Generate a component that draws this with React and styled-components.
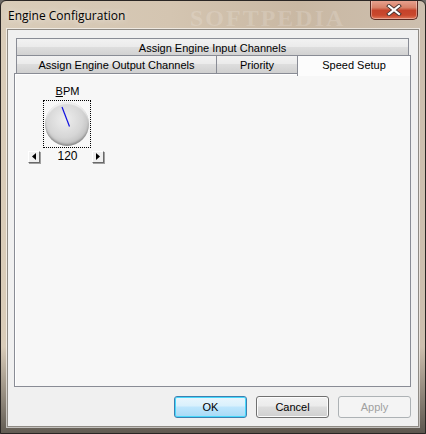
import React from "react";
import styled, { createGlobalStyle } from "styled-components";

const ui = `"Liberation Sans", Arial, sans-serif`;
const line = "#898c95";

const Global = createGlobalStyle`
  html, body { margin: 0; padding: 0; background: #6d6a66; }
  body { font-family: ${ui}; font-size: 11px; color: #000; }
`;

export default function App() {
  const [active, setActive] = React.useState("speed");
  const [bpm, setBpm] = React.useState(120);

  return (
    <>
      <Global />
      <Window>
        <TitleBar>
          <Title>Engine Configuration</Title>
          <Watermark>SOFTPEDIA</Watermark>
          <CloseButton aria-label="Close">
            <svg width="16" height="12" viewBox="0 0 16 12">
              <path d="M3 2 L13 10 M13 2 L3 10" stroke="#4a3530" strokeWidth="4" strokeLinecap="square" />
              <path d="M3 2 L13 10 M13 2 L3 10" stroke="#fff" strokeWidth="2.2" strokeLinecap="square" />
            </svg>
          </CloseButton>
        </TitleBar>

        <Client>
          <TabControl>
            <TabRow>
              <Tab $grow onClick={() => setActive("input")}>Assign Engine Input Channels</Tab>
            </TabRow>
            <TabRow>
              <Tab $w={201} onClick={() => setActive("output")}>Assign Engine Output Channels</Tab>
              <Tab $w={82} onClick={() => setActive("priority")}>Priority</Tab>
              <Tab $w={114} $selected={active === "speed"} onClick={() => setActive("speed")}>
                Speed Setup
              </Tab>
            </TabRow>
            <Panel>
              <Dial>
                <DialLabel><u>B</u>PM</DialLabel>
                <DialFrame>
                  <Knob>
                    <svg width="44" height="44" viewBox="0 0 44 44">
                      <line x1="17" y1="5" x2="24.5" y2="24.5" stroke="#1010e0" strokeWidth="1.2" />
                    </svg>
                  </Knob>
                </DialFrame>
                <DialControls>
                  <ArrowButton onClick={() => setBpm((v) => v - 1)}>
                    <svg width="4" height="7" viewBox="0 0 4 7"><path d="M4 0 L0 3.5 L4 7 Z" fill="#000" /></svg>
                  </ArrowButton>
                  <DialValue>{bpm}</DialValue>
                  <ArrowButton onClick={() => setBpm((v) => v + 1)}>
                    <svg width="4" height="7" viewBox="0 0 4 7"><path d="M0 0 L4 3.5 L0 7 Z" fill="#000" /></svg>
                  </ArrowButton>
                </DialControls>
              </Dial>
            </Panel>
          </TabControl>

          <ButtonBar>
            <Button $variant="default">OK</Button>
            <Button>Cancel</Button>
            <Button $variant="disabled" disabled>Apply</Button>
          </ButtonBar>
        </Client>
      </Window>
    </>
  );
}

const Window = styled.div`
  width: 426px;
  height: 434px;
  box-sizing: border-box;
  border: 1px solid #2a2624;
  border-radius: 6px 6px 0 0;
  padding: 0 6px 6px 6px;
  display: flex;
  flex-direction: column;
  overflow: hidden;
  background: linear-gradient(
      180deg,
      rgba(255, 255, 255, 0) 0%,
      rgba(255, 255, 255, 0) 80%,
      rgba(0, 0, 0, 0.55) 100%
    ),
    linear-gradient(90deg, #d9ccb9 0%, #d4c5b1 40%, #c9b8a3 70%, #cdbfae 100%);
`;

const TitleBar = styled.div`
  height: 28px;
  display: flex;
  align-items: flex-start;
`;

const Title = styled.div`
  font-family: "Open Sans", "Noto Sans", sans-serif;
  font-size: 12px;
  line-height: 16px;
  padding: 7px 0 0 1px;
  color: #000;
  text-shadow: 0 0 6px rgba(255, 255, 255, 0.9);
`;

const Watermark = styled.div`
  flex: 1;
  text-align: center;
  padding: 4px 0 0 40px;
  font-family: "Liberation Serif", serif;
  font-weight: bold;
  font-size: 24px;
  letter-spacing: 2px;
  color: rgba(255, 255, 255, 0.16);
  line-height: 26px;
  white-space: nowrap;
`;

const CloseButton = styled.button`
  width: 48px;
  height: 20px;
  margin: -1px 1px 0 0;
  padding: 0;
  display: flex;
  align-items: center;
  justify-content: center;
  border: 1px solid #5b2a22;
  border-top: none;
  border-radius: 0 0 5px 5px;
  background: linear-gradient(
    180deg,
    #e9a694 0%,
    #d88168 40%,
    #c5432a 55%,
    #c9482d 80%,
    #e0785a 100%
  );
  box-shadow: inset 0 0 0 1px rgba(255, 255, 255, 0.35);
`;

const Client = styled.div`
  flex: 1;
  display: flex;
  flex-direction: column;
  background: #f0f0f0;
  border: 1px solid #8e8a84;
  box-shadow: 0 0 0 1px rgba(255, 255, 255, 0.6);
  padding: 9px 7px 8px 6px;
`;

const TabControl = styled.div`
  flex: 1;
  display: flex;
  flex-direction: column;
`;

const TabRow = styled.div`
  display: flex;
  padding: 0 2px;
  height: 18px;
  align-items: flex-end;
  position: relative;
  & + & {
    margin-top: -1px;
  }
`;

const Tab = styled.div`
  box-sizing: border-box;
  ${(p) => (p.$grow ? "flex: 1;" : `width: ${p.$w}px;`)}
  height: ${(p) => (p.$selected ? "21px" : "19px")};
  margin: ${(p) => (p.$selected ? "0 -2px -2px -2px" : "0")};
  position: relative;
  z-index: ${(p) => (p.$selected ? 2 : 1)};
  display: flex;
  align-items: center;
  justify-content: center;
  padding-bottom: ${(p) => (p.$selected ? "3px" : "0")};
  border: 1px solid ${line};
  border-bottom: ${(p) => (p.$selected ? "none" : `1px solid ${line}`)};
  & + & {
    margin-left: -1px;
  }
  background: ${(p) =>
    p.$selected
      ? "#fcfcfc"
      : "linear-gradient(180deg, #f2f2f2 0%, #ebebeb 45%, #dddddd 50%, #d0d0d0 100%)"};
  font-size: 11px;
  white-space: nowrap;
  cursor: default;
`;

const Panel = styled.div`
  flex: 1;
  margin-top: -1px;
  border: 1px solid ${line};
  background: #f7f7f7;
  box-shadow: inset 1px 1px 0 #fff;
  padding: 11px 0 0 13px;
`;

const Dial = styled.div`
  width: 76px;
  display: flex;
  flex-direction: column;
  align-items: center;
`;

const DialLabel = styled.div`
  font-size: 11px;
  line-height: 13px;
  height: 15px;
  padding-left: 3px;
`;

const DialFrame = styled.div`
  width: 48px;
  height: 48px;
  box-sizing: border-box;
  border: 1px dotted #000;
  display: flex;
  align-items: center;
  justify-content: center;
  margin-left: 2px;
`;

const Knob = styled.div`
  width: 44px;
  height: 44px;
  border-radius: 50%;
  background: radial-gradient(
    circle at 45% 40%,
    #eeeeee 0%,
    #d6d6d6 50%,
    #b4b4b4 82%,
    #8e8e8e 100%
  );
  box-shadow: inset 0 -2px 2px rgba(0, 0, 0, 0.25), inset 0 2px 1px rgba(255, 255, 255, 0.6);
  & > svg {
    display: block;
  }
`;

const DialControls = styled.div`
  display: flex;
  align-items: center;
  justify-content: space-between;
  width: 76px;
  margin-top: 2px;
`;

const ArrowButton = styled.div`
  width: 12px;
  height: 12px;
  box-sizing: border-box;
  display: flex;
  align-items: center;
  justify-content: center;
  background: #f0f0f0;
  border: 1px solid;
  border-color: #fff #696969 #696969 #fff;
  box-shadow: 1px 1px 0 #a0a0a0;
`;

const DialValue = styled.div`
  font-size: 12px;
  line-height: 13px;
  color: #000;
  padding-left: 3px;
`;

const ButtonBar = styled.div`
  display: flex;
  justify-content: flex-end;
  gap: 9px;
  padding-top: 9px;
`;

const Button = styled.button`
  width: 73px;
  height: 22px;
  box-sizing: border-box;
  font-family: ${ui};
  font-size: 11px;
  border-radius: 3px;
  padding: 0;
  border: 1px solid
    ${(p) =>
      p.$variant === "default" ? "#3c7fb1" : p.$variant === "disabled" ? "#adb2b5" : "#707070"};
  color: ${(p) => (p.$variant === "disabled" ? "#a0a0a0" : "#000")};
  background: ${(p) =>
    p.$variant === "default"
      ? "linear-gradient(180deg, #eaf6fd 0%, #d9f0fc 45%, #bee6fd 50%, #a7d9f5 100%)"
      : p.$variant === "disabled"
      ? "#f4f4f4"
      : "linear-gradient(180deg, #f2f2f2 0%, #ebebeb 45%, #dddddd 50%, #cfcfcf 100%)"};
  box-shadow: ${(p) =>
    p.$variant === "default"
      ? "inset 0 0 0 1px #48d8fb"
      : p.$variant === "disabled"
      ? "none"
      : "inset 0 0 0 1px #fcfcfc"};
`;
